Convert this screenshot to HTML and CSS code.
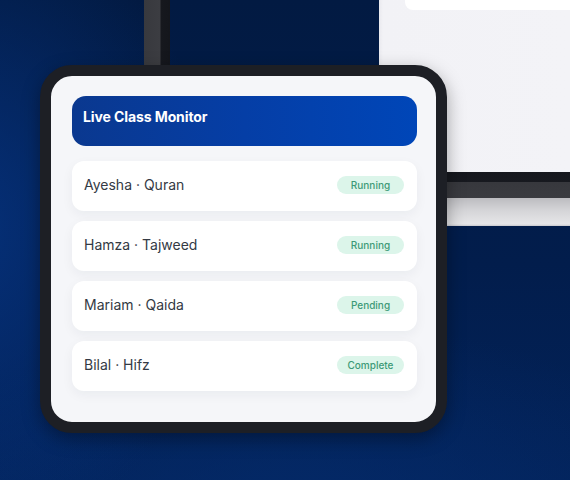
FILE: index.html
```html
<!DOCTYPE html>
<html lang="en">
<head>
<meta charset="utf-8">
<title>Live Class Monitor</title>
<link rel="stylesheet" href="styles.css">
</head>
<body>
<div class="scene">
  <div class="bg-pillar"></div>
  <div class="bg-screen"><div class="bg-screen-card"></div></div>
  <div class="bg-bezel"></div>

  <section class="monitor">
    <header class="monitor-head">Live Class Monitor</header>
    <ul class="class-list">
      <li class="class-row"><span class="class-name">Ayesha · Quran</span><span class="badge">Running</span></li>
      <li class="class-row"><span class="class-name">Hamza · Tajweed</span><span class="badge">Running</span></li>
      <li class="class-row"><span class="class-name">Mariam · Qaida</span><span class="badge">Pending</span></li>
      <li class="class-row"><span class="class-name">Bilal · Hifz</span><span class="badge">Complete</span></li>
    </ul>
  </section>
</div>
</body>
</html>
```
FILE: styles.css
```css
* { box-sizing: border-box; }

html, body {
  margin: 0;
  padding: 0;
}

body {
  width: 570px;
  height: 480px;
  overflow: hidden;
  font-family: Inter, "Noto Sans", "Liberation Sans", sans-serif;
}

.scene {
  position: relative;
  width: 570px;
  height: 480px;
  overflow: hidden;
  background:
    radial-gradient(ellipse 260px 320px at -40px 230px, rgba(6, 52, 130, 0.85), rgba(6, 52, 130, 0) 100%),
    radial-gradient(ellipse 420px 200px at 300px 520px, rgba(4, 44, 110, 0.7), rgba(4, 44, 110, 0) 100%),
    linear-gradient(180deg, #021a42 0%, #021d4c 55%, #03235a 100%);
}

.bg-pillar {
  position: absolute;
  left: 144px;
  top: 0;
  width: 26px;
  height: 74px;
  background: linear-gradient(90deg, #38393e 0, #3c3d42 16px, #16181e 17px, #14161c 26px);
}

.bg-screen {
  position: absolute;
  left: 379px;
  top: 0;
  width: 191px;
  height: 172px;
  background: linear-gradient(90deg, #e9e9ee 0, #f2f2f6 4px, #f3f3f7 100%);
}

.bg-screen-card {
  margin-left: 26px;
  height: 10px;
  background: #ffffff;
  border-bottom-left-radius: 8px;
}

.bg-bezel {
  position: absolute;
  left: 430px;
  top: 172px;
  width: 140px;
  height: 54px;
  background: linear-gradient(180deg,
    #15171d 0, #17191f 10px,
    #37383d 10px, #3a3b40 26px,
    #bcbcc0 26px, #d4d4d7 38px, #e6e6e8 52px, #c9c9cd 54px);
}

.monitor {
  position: absolute;
  left: 40px;
  top: 65px;
  width: 407px;
  border: 11px solid #1d1f25;
  border-radius: 32px;
  background: #f5f6f9;
  padding: 20px 19px 31px 21px;
  box-shadow: 0 6px 18px rgba(0, 0, 0, 0.35);
}

.monitor-head {
  height: 50px;
  padding: 12px 11px;
  border-radius: 14px;
  background: linear-gradient(90deg, #0a388f 0%, #053ea6 50%, #0046b8 100%);
  color: #ffffff;
  font-size: 14px;
  font-weight: 700;
  line-height: 17px;
  letter-spacing: -0.1px;
}

.class-list {
  list-style: none;
  margin: 15px 0 0;
  padding: 0;
  display: flex;
  flex-direction: column;
  gap: 10px;
}

.class-row {
  height: 50px;
  display: flex;
  align-items: center;
  justify-content: space-between;
  padding: 0 13px 3px 12px;
  background: #ffffff;
  border-radius: 12px;
  box-shadow: 0 4px 12px rgba(20, 30, 60, 0.05);
}

.class-name {
  font-size: 14px;
  color: #343a44;
  line-height: 17px;
}

.badge {
  width: 67px;
  height: 18px;
  border-radius: 9px;
  background: #dcf5ea;
  color: #3c9a77;
  font-size: 10px;
  font-weight: 500;
  line-height: 18px;
  text-align: center;
}
```
